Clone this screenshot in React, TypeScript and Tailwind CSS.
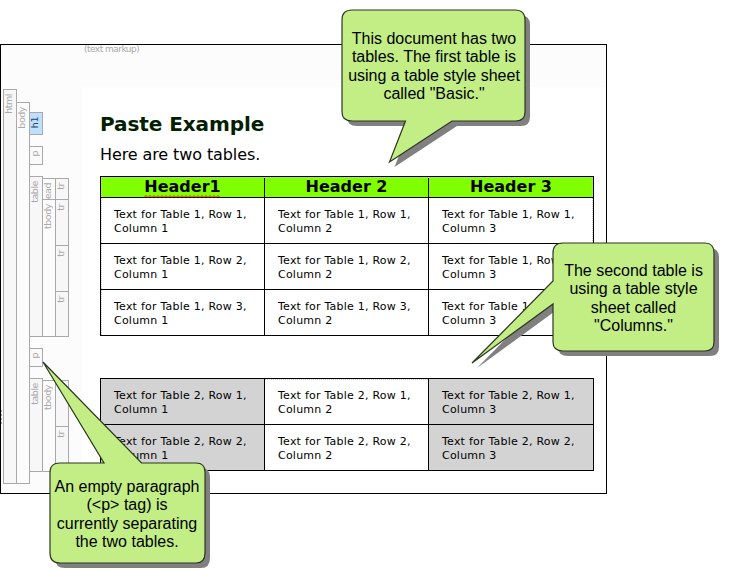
import React from "react";

const COLUMNS = [1, 2, 3];

type TagProps = { label?: string; box: string; text?: string };

// A structure bar with its element name reading upwards from the top end.
function Tag({ label, box, text = "text-[#a9a9a9]" }: TagProps) {
  return (
    <div className={`flex w-[14px] shrink-0 justify-start overflow-hidden border border-[#a9a9a9] ${box}`}>
      <span
        className={`h-fit rotate-180 whitespace-nowrap pb-[4px] font-['DejaVu_Sans',sans-serif] text-[9.5px] leading-[10px] tracking-[-0.45px] [writing-mode:vertical-rl] ${text}`}
      >
        {label}
      </span>
    </div>
  );
}

function StructureBars() {
  return (
    <div className="flex w-[81px] shrink-0 items-start pl-[2px] pt-[44px]">
      <Tag label="html" box="h-[395px] bg-[#f7f7f7]" />
      <Tag label="body" box="-ml-px mt-[13px] h-[382px] bg-[#fcfcfc]" />
      <div className="-ml-px flex flex-col pt-[23px]">
        <Tag label="h1" box="h-[23px] bg-[#bfdfff]" text="text-[#28465c]" />
        <Tag label="p" box="mt-[11px] h-[19px] bg-[#fafafa]" />
        <div className="mt-[11px] flex">
          <Tag label="table" box="h-[161px] bg-[#f7f7f7]" />
          <div className="-ml-px mt-[2px] flex flex-col">
            <Tag label="ead" box="h-[22px] bg-[#fcfcfc]" />
            <Tag label="tbody" box="-mt-px h-[138px] bg-[#fcfcfc]" />
          </div>
          <div className="-ml-px mt-[2px] flex flex-col">
            <Tag label="tr" box="h-[22px] bg-[#f7f7f7]" />
            <Tag label="tr" box="-mt-px h-[47px] bg-[#f7f7f7]" />
            <Tag label="tr" box="-mt-px h-[47px] bg-[#f7f7f7]" />
            <Tag label="tr" box="-mt-px h-[46px] bg-[#f7f7f7]" />
          </div>
        </div>
        <Tag label="p" box="mt-[11px] h-[19px] bg-[#fafafa]" />
        <div className="mt-[11px] flex">
          <Tag label="table" box="h-[94px] bg-[#f7f7f7]" />
          <Tag label="tbody" box="-ml-px mt-[2px] h-[92px] bg-[#fcfcfc]" />
          <div className="-ml-px mt-[2px] flex flex-col">
            <Tag box="h-[47px] bg-[#f7f7f7]" />
            <Tag label="tr" box="-mt-px h-[46px] bg-[#f7f7f7]" />
          </div>
        </div>
      </div>
    </div>
  );
}

function Row({ table, row, shaded }: { table: number; row: number; shaded?: boolean }) {
  return (
    <div className="grid h-[46px] grid-cols-[164px_164px_165px]">
      {COLUMNS.map((col) => (
        <div
          key={col}
          className={`whitespace-nowrap border-r border-t border-black pl-[13px] pt-[10px] text-[11px] leading-[14px] tracking-[0.23px] ${
            shaded && col !== 2 ? "bg-[#d3d3d3]" : "bg-white"
          }`}
        >
          <div>Text for Table {table}, Row {row},</div>
          <div>Column {col}</div>
        </div>
      ))}
    </div>
  );
}

// Zigzag spelling mark, 77px wide, two pixels up and down per tooth.
const WAVE = Array.from({ length: 39 }, (_, i) => `${i * 2},${i % 2 ? 0.5 : 2.5}`).join(" ");

function Squiggle() {
  return (
    <svg className="absolute bottom-[-2px] left-0 h-[3px] w-[77px]" viewBox="0 0 77 3" aria-hidden="true">
      <polyline points={WAVE} fill="none" stroke="#ff1000" strokeWidth="1" />
    </svg>
  );
}

function Document() {
  return (
    <div className="mt-[42px] flex-1 bg-white pl-[18px]">
      <h1 className="mt-[24px] whitespace-nowrap text-[20px] font-bold leading-[26px] tracking-[-0.07px] text-[#002000]">
        Paste Example
      </h1>
      <p className="mt-[7px] h-[20px] whitespace-nowrap text-[16px] leading-[22px] tracking-[-0.1px]">
        Here are two tables.
      </p>
      <div className="relative mt-[12px] w-[494px] border-b border-l border-black">
        <div className="grid h-[21px] grid-cols-[164px_164px_165px] text-center text-[16px] font-bold leading-[19px]">
          <div className="border-r border-t border-black bg-[#80ff00]">
            <span className="relative inline-block">
              Header1
              <Squiggle />
            </span>
          </div>
          <div className="border-r border-t border-black bg-[#80ff00]">Header 2</div>
          <div className="border-r border-t border-black bg-[#80ff00]">Header 3</div>
        </div>
        <Row table={1} row={1} />
        <Row table={1} row={2} />
        <Row table={1} row={3} />
        <div className="pointer-events-none absolute bottom-0 left-0 right-px top-px border border-b-0 border-dotted border-[#c8c8c8]" />
      </div>
      <div className="relative mt-[42px] w-[494px] border-b border-l border-black">
        <Row table={2} row={1} shaded />
        <Row table={2} row={2} shaded />
        <div className="pointer-events-none absolute left-[164px] top-px w-[163px] border-t border-dotted border-[#c8c8c8]" />
      </div>
    </div>
  );
}

function CalloutShape({ d }: { d: string }) {
  return (
    <g>
      <path d={d} fill="#808080" transform="translate(5 5)" />
      <path d={d} fill="#c2ee85" stroke="#2c3620" strokeWidth="1.2" />
    </g>
  );
}

function Callout({ box, lines }: { box: string; lines: string[] }) {
  return (
    <div
      className={`absolute flex flex-col items-center justify-center whitespace-nowrap font-['Liberation_Sans',sans-serif] text-[16px] leading-[18.3px] text-black ${box}`}
    >
      {lines.map((line) => (
        <div key={line}>{line}</div>
      ))}
    </div>
  );
}

export default function App() {
  return (
    <div className="relative h-[578px] w-[729px] overflow-hidden bg-white pt-[44px] font-['DejaVu_Sans',sans-serif] text-black">
      <div className="relative flex h-[450px] w-[607px] border border-black bg-[#fcfcfc]">
        <StructureBars />
        <Document />
        <div className="absolute left-[83px] top-[-2px] whitespace-nowrap text-[9px] leading-[12px] tracking-[-0.52px] text-[#a9a9a9]">
          (text markup)
        </div>
        <div className="absolute left-0 top-[365px] h-[14px] w-px bg-[repeating-linear-gradient(#a0a0a0_0_2px,#fcfcfc_2px_4px)]" />
      </div>
      <svg className="absolute inset-0" width="729" height="578" aria-hidden="true">
        <CalloutShape d="M352 10H515Q525 10 525 20V112Q525 121 516 121H452L389.5 162 405.5 121H352Q342 121 342 112V20Q342 10 352 10Z" />
        <CalloutShape d="M563 243H705Q714 243 714 253V342Q714 351 705 351H563Q553 351 553 342V304L472 363 553 281V253Q553 243 563 243Z" />
        <CalloutShape d="M60 463H104L43 362 141.5 463H196Q205 463 205 472V553Q205 563 196 563H60Q50 563 50 553V472Q50 463 60 463Z" />
      </svg>
      <Callout
        box="left-[342px] top-[11px] h-[111px] w-[184px]"
        lines={["This document has two", "tables. The first table is", "using a table style sheet", 'called "Basic."']}
      />
      <Callout
        box="left-[553px] top-[244px] h-[109px] w-[161px]"
        lines={["The second table is", "using a table style", "sheet called", '"Columns."']}
      />
      <Callout
        box="left-[49px] top-[464px] h-[101px] w-[156px]"
        lines={["An empty paragraph", "(<p> tag) is", "currently separating", "the two tables."]}
      />
    </div>
  );
}
